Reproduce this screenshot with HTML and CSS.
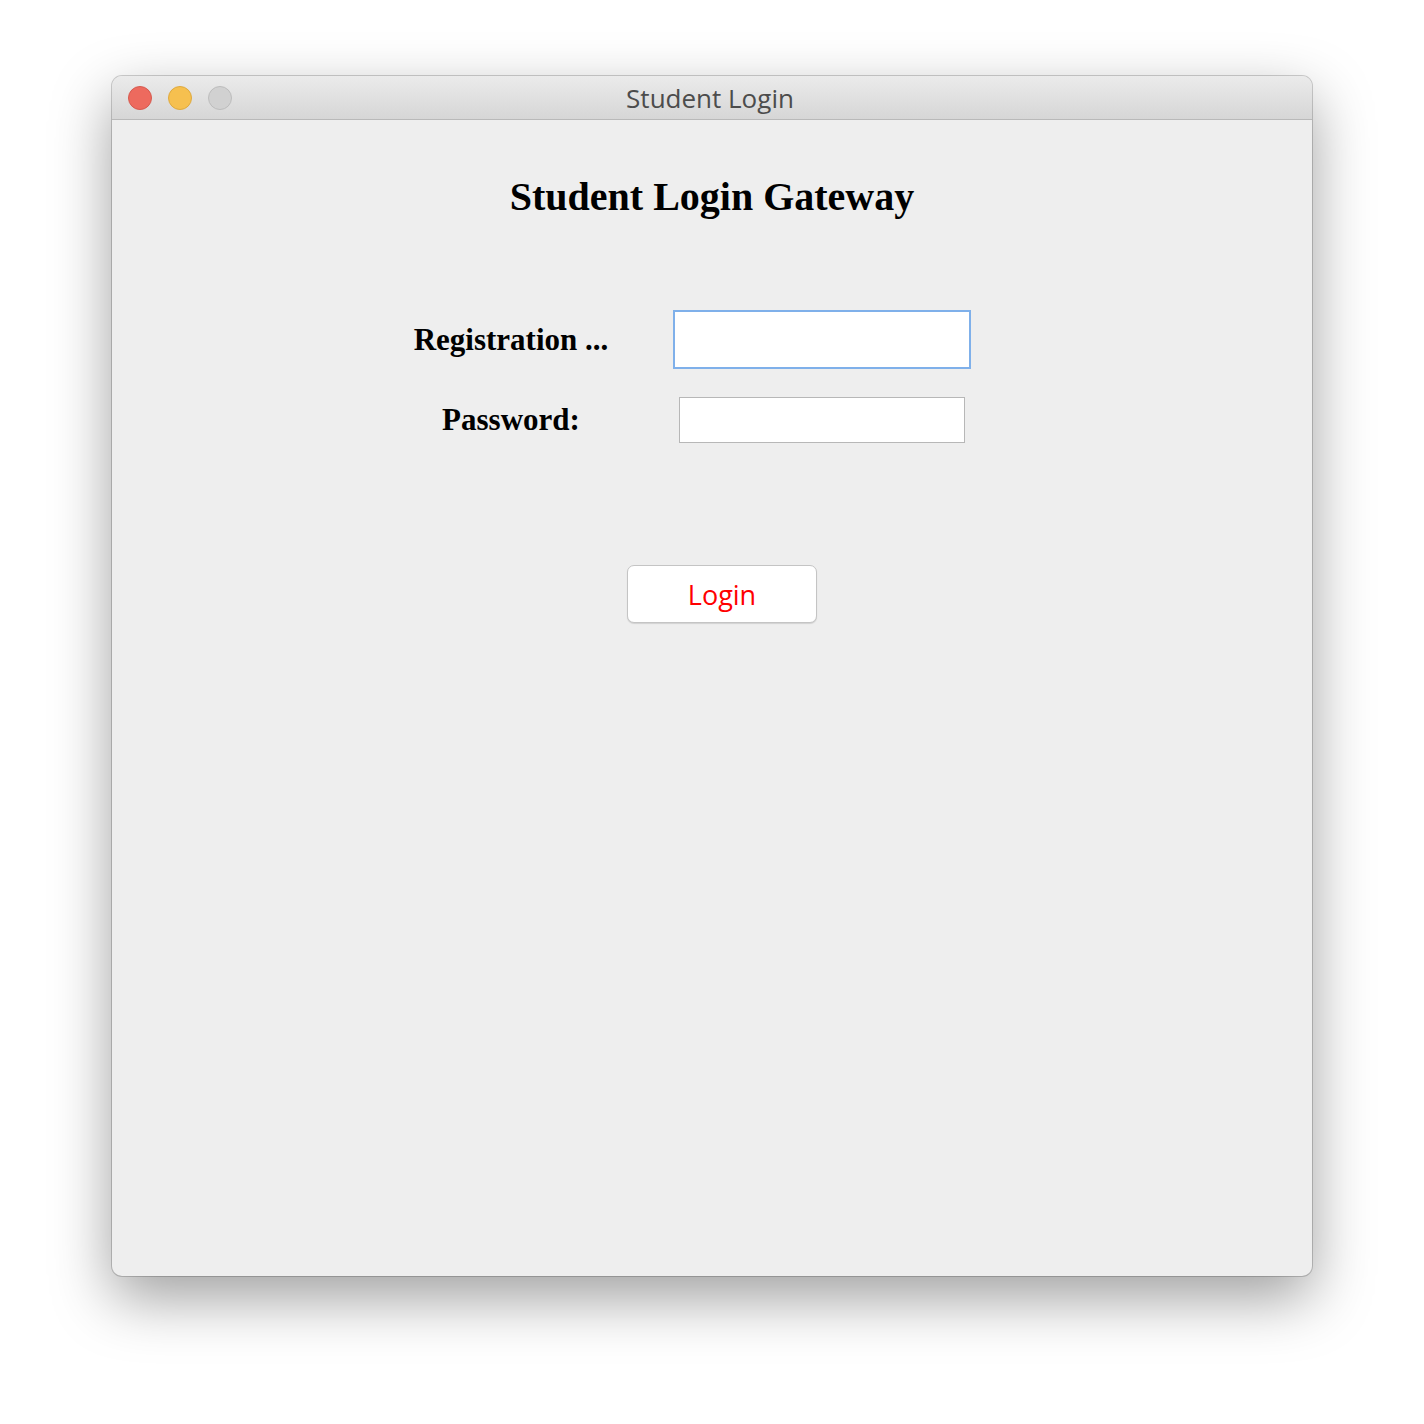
FILE: index.html
```html
<!DOCTYPE html>
<html>
<head>
<meta charset="utf-8">
<link rel="stylesheet" href="styles.css">
</head>
<body>
<div class="window">
  <div class="titlebar">
    <div class="lights">
      <span class="light red"></span>
      <span class="light yellow"></span>
      <span class="light gray"></span>
    </div>
    <div class="title">Student Login</div>
  </div>
  <div class="content">
    <h1 class="heading">Student Login Gateway</h1>
    <div class="form">
      <div class="label">Registration ...</div>
      <div class="field"><input class="input focused" type="text"></div>
      <div class="label">Password:</div>
      <div class="field"><input class="input small" type="password"></div>
    </div>
    <div class="actions">
      <button class="btn">Login</button>
    </div>
  </div>
</div>
</body>
</html>
```
FILE: styles.css
```css
html, body {
  margin: 0;
  padding: 0;
  background: #ffffff;
}
body {
  padding: 76px 112px 148px;
  width: 1200px;
}
.window {
  width: 1200px;
  height: 1200px;
  border-radius: 10px;
  background: #eeeeee;
  box-shadow: 0 0 0 1px rgba(0,0,0,0.18), 0 22px 60px rgba(0,0,0,0.38);
  overflow: hidden;
  display: flex;
  flex-direction: column;
}
.titlebar {
  height: 43px;
  border-bottom: 1px solid #b9b9b9;
  background: linear-gradient(#ebebeb, #d6d6d6);
  position: relative;
  display: flex;
  align-items: center;
  justify-content: center;
}
.lights {
  position: absolute;
  left: 16px;
  top: 10px;
  display: flex;
  gap: 16px;
}
.light {
  width: 24px;
  height: 24px;
  border-radius: 50%;
  box-sizing: border-box;
}
.red { background: #ed6a5e; border: 1px solid #d55a4f; }
.yellow { background: #f6c04f; border: 1px solid #dea93f; }
.gray { background: #d1d1d1; border: 1px solid #bcbcbc; }
.title {
  font-family: "Open Sans", "Liberation Sans", sans-serif;
  font-size: 26px;
  color: #4c4c4c;
  margin-left: -4px;
}
.content {
  flex: 1;
  display: flex;
  flex-direction: column;
}
.heading {
  margin: 55px 0 0 0;
  text-align: center;
  font-family: "Liberation Serif", serif;
  font-weight: bold;
  font-size: 40px;
  line-height: 44px;
}
.form {
  margin-top: 91px;
  margin-left: 290px;
  display: grid;
  grid-template-columns: 218px 300px;
  column-gap: 52px;
  row-gap: 28px;
  align-items: center;
}
.label {
  text-align: center;
  font-family: "Liberation Serif", serif;
  font-weight: bold;
  font-size: 31px;
}
.field {
  display: flex;
  justify-content: center;
}
.input {
  box-sizing: border-box;
  background: #fff;
  border: 1px solid #b7b7b7;
  margin: 0;
  padding: 0 8px;
  outline: none;
}
.input.focused {
  width: 298px;
  height: 59px;
  border: 2px solid #7fb0ea;
}
.input.small {
  width: 286px;
  height: 46px;
}
.actions {
  margin-top: 122px;
  margin-left: 515px;
}
.btn {
  width: 190px;
  height: 58px;
  background: #fff;
  border: 1px solid #c4c4c4;
  border-radius: 7px;
  box-shadow: 0 1px 1px rgba(0,0,0,0.12);
  color: #ff0000;
  font-family: "Open Sans", "Liberation Sans", sans-serif;
  font-size: 27px;
  padding: 0;
}
```
